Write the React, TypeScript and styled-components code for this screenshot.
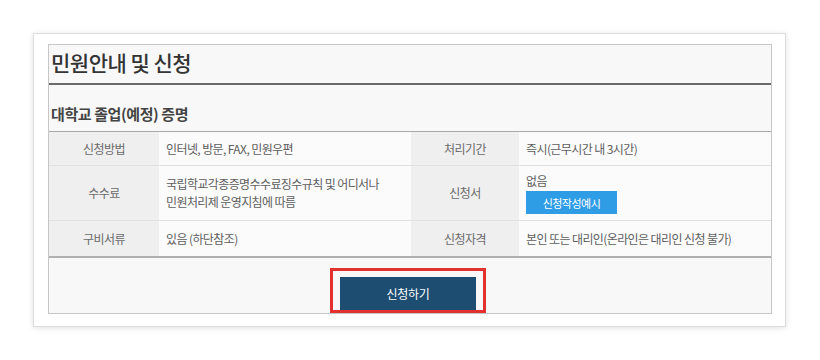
import styled, { createGlobalStyle } from "styled-components";

const GlobalStyle = createGlobalStyle`
    html, body {
        margin: 0;
        padding: 0;
        background: #ffffff;
    }
    body {
        width: 820px;
        height: 360px;
        overflow: hidden;
        font-family: "Noto Sans CJK KR", "Noto Sans", sans-serif;
    }
`;

const Page = styled.div`
    padding: 33px 34px 0 33px;
`;

const Card = styled.div`
    background: #ffffff;
    border: 1px solid #dcdcdc;
    box-shadow: 0 1px 6px rgba(0, 0, 0, 0.12);
    padding: 10px 13px 13px 14px;
    height: 294px;
    box-sizing: border-box;
`;

const Panel = styled.section`
    border: 1px solid #c6c6c6;
    background: #f8f8f8;
    overflow: hidden;
    height: 270px;
    box-sizing: border-box;
`;

const Title = styled.h1`
    margin: 0;
    height: 40px;
    padding: 0 0 4px 2px;
    box-sizing: border-box;
    display: flex;
    align-items: center;
    font-size: 21px;
    font-weight: 500;
    letter-spacing: -0.5px;
    color: #333333;
    border-bottom: 2px solid #6a6a6a;
`;

const SubTitle = styled.h2`
    margin: 0;
    height: 47px;
    padding: 18px 0 0 2px;
    box-sizing: border-box;
    font-size: 15px;
    font-weight: 700;
    letter-spacing: -0.4px;
    color: #444444;
    border-bottom: 1px solid #a8a8a8;
`;

const InfoTable = styled.div`
    display: grid;
    grid-template-columns: 110px 252px 108px 1fr;
    grid-template-rows: 34px 55px 35px;
    border-bottom: 2px solid #b0b0b0;
`;

const Cell = styled.div<{ $label?: boolean; $last?: boolean }>`
    display: flex;
    flex-direction: column;
    justify-content: center;
    align-items: ${(p) => (p.$label ? "center" : "flex-start")};
    padding: ${(p) => (p.$label ? "0" : "0 7px")};
    background: ${(p) => (p.$label ? "#efefef" : "#fbfbfb")};
    border-bottom: ${(p) => (p.$last ? "none" : "1px solid #e0e0e0")};
    font-size: 12px;
    letter-spacing: -0.6px;
    line-height: 18px;
    color: ${(p) => (p.$label ? "#6a6a6a" : "#5e5e5e")};
`;

const SampleButton = styled.button`
    margin-top: 1px;
    width: 91px;
    height: 23px;
    border: none;
    background: #2f9ce6;
    color: #ffffff;
    font-family: inherit;
    font-size: 11px;
    letter-spacing: -0.5px;
    padding: 0;
`;

const Actions = styled.div`
    display: flex;
    justify-content: center;
    padding-top: 10px;
    padding-right: 4px;
`;

const Highlight = styled.div`
    border: 3px solid #e0312f;
    padding: 6px 7px 0;
`;

const SubmitButton = styled.button`
    display: block;
    width: 136px;
    height: 33px;
    border: none;
    background: #1e4d72;
    color: #ffffff;
    font-family: inherit;
    font-size: 12px;
    letter-spacing: -0.3px;
`;

const rows = [
    {
        label: "신청방법",
        value: ["인터넷, 방문, FAX, 민원우편"],
        label2: "처리기간",
        value2: "즉시(근무시간 내 3시간)",
    },
    {
        label: "수수료",
        value: ["국립학교각종증명수수료징수규칙 및 어디서나", "민원처리제 운영지침에 따름"],
        label2: "신청서",
        value2: "없음",
        sample: true,
    },
    {
        label: "구비서류",
        value: ["있음 (하단참조)"],
        label2: "신청자격",
        value2: "본인 또는 대리인(온라인은 대리인 신청 불가)",
    },
];

const App = () => {
    return (
        <>
            <GlobalStyle />
            <Page>
                <Card>
                    <Panel>
                        <Title>민원안내 및 신청</Title>
                        <SubTitle>대학교 졸업(예정) 증명</SubTitle>
                        <InfoTable>
                            {rows.map((row, i) => {
                                const last = i === rows.length - 1;
                                return [
                                    <Cell key={`${i}-a`} $label $last={last}>
                                        {row.label}
                                    </Cell>,
                                    <Cell key={`${i}-b`} $last={last}>
                                        {row.value.map((line) => (
                                            <span key={line}>{line}</span>
                                        ))}
                                    </Cell>,
                                    <Cell key={`${i}-c`} $label $last={last}>
                                        {row.label2}
                                    </Cell>,
                                    <Cell key={`${i}-d`} $last={last}>
                                        <span>{row.value2}</span>
                                        {row.sample && <SampleButton>신청작성예시</SampleButton>}
                                    </Cell>,
                                ];
                            })}
                        </InfoTable>
                        <Actions>
                            <Highlight>
                                <SubmitButton>신청하기</SubmitButton>
                            </Highlight>
                        </Actions>
                    </Panel>
                </Card>
            </Page>
        </>
    );
};

export default App;
